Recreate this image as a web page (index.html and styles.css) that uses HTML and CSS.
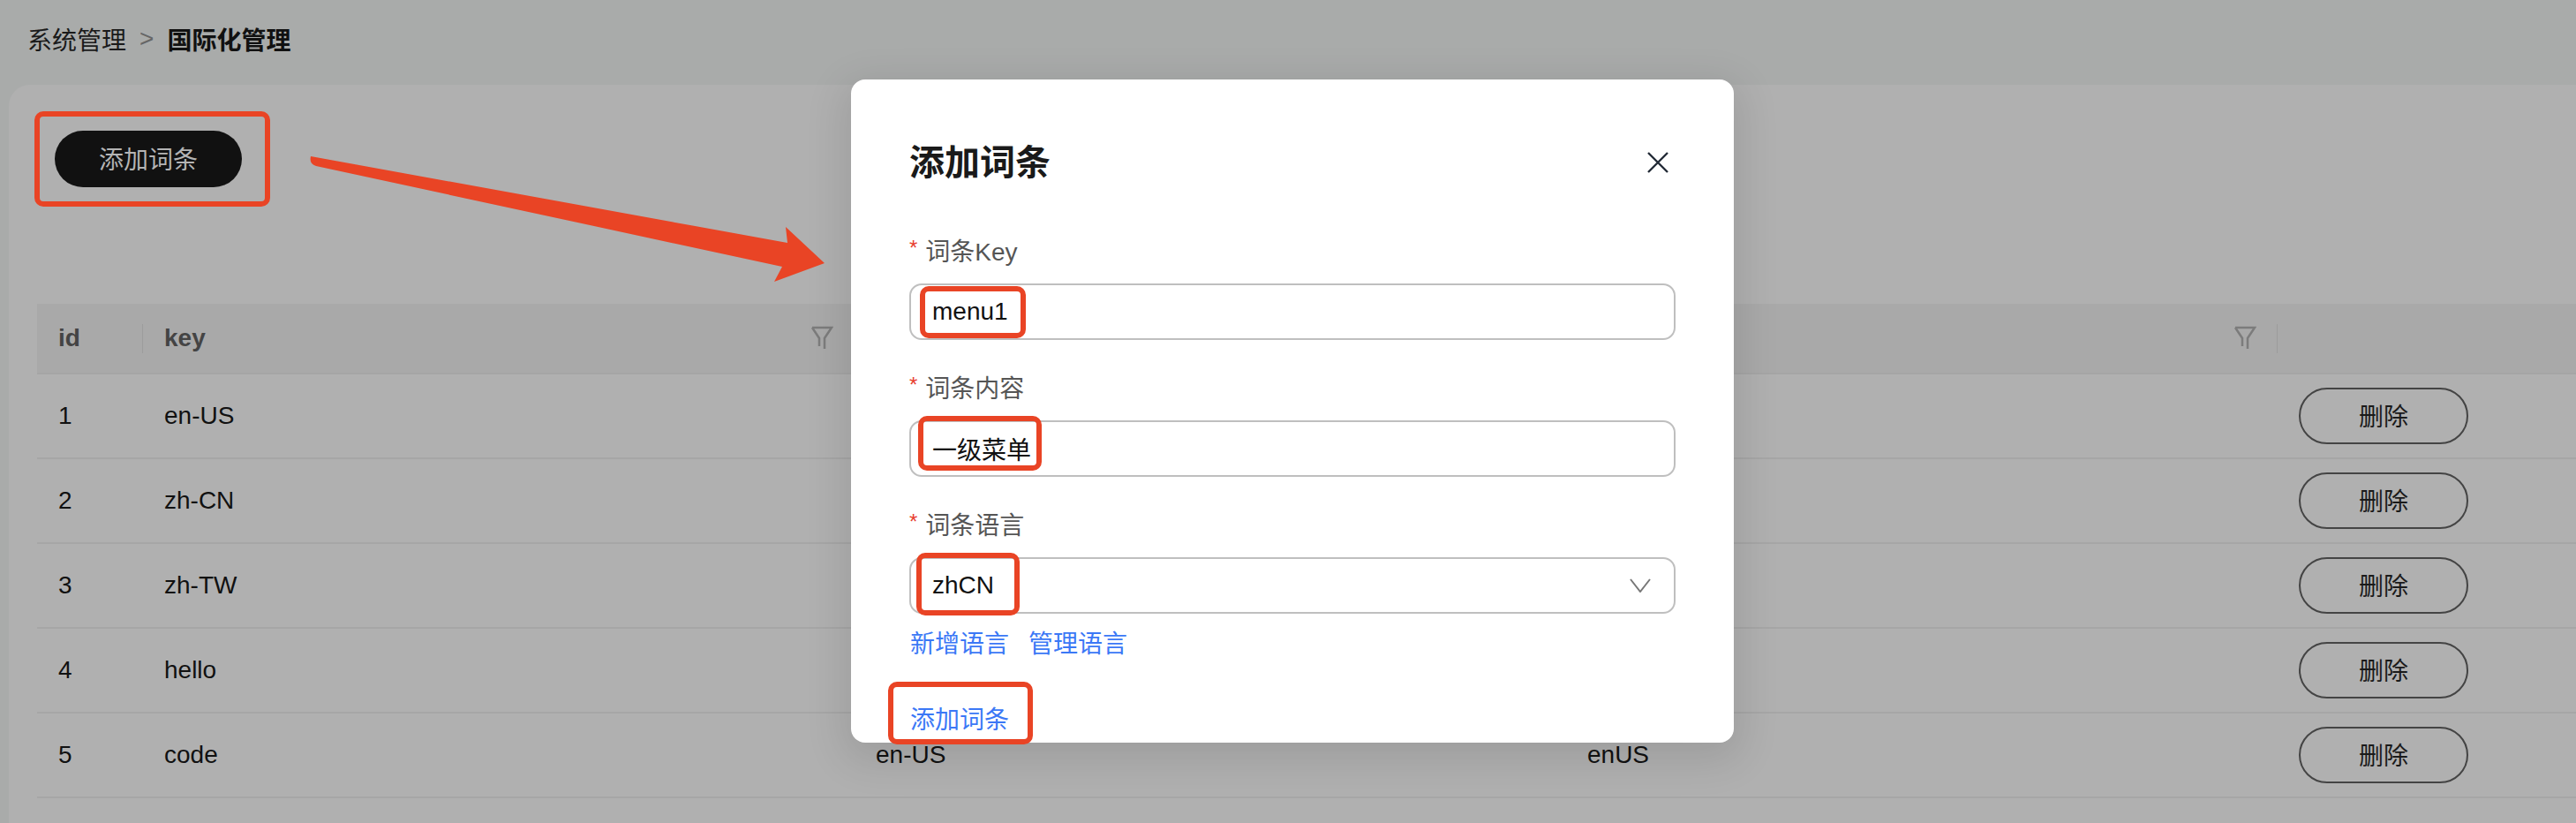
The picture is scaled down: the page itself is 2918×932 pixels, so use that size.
FILE: index.html
```html
<!DOCTYPE html>
<html>
<head>
  <meta charset="utf-8" />
  <title>国际化管理</title>
  <link rel="stylesheet" href="styles.css">
</head>
<body>
  <div class="crumbs">
    <span>系统管理</span>
    <span class="crumb-sep">&gt;</span>
    <b>国际化管理</b>
  </div>
  <div class="card">
    <button type="button" class="add-btn">添加词条</button>
    <table class="words">
      <thead>
        <tr>
          <th class="col-id">id</th>
          <th class="col-text">
            <div class="th-inner">key
              <svg class="filter" viewBox="0 0 26 28"><path d="M2 2H24L16 14V26M10 23V14L2 2"/></svg>
            </div>
          </th>
          <th class="col-text">
            <div class="th-inner">
              <span></span>
              <svg class="filter" viewBox="0 0 26 28"><path d="M2 2H24L16 14V26M10 23V14L2 2"/></svg>
            </div>
          </th>
          <th class="col-text">
            <div class="th-inner">
              <span></span>
              <svg class="filter" viewBox="0 0 26 28"><path d="M2 2H24L16 14V26M10 23V14L2 2"/></svg>
            </div>
          </th>
          <th class="col-action"></th>
        </tr>
      </thead>
      <tbody>
        <tr><td>1</td><td>en-US</td><td></td><td></td><td><button type="button" class="del-btn">删除</button></td></tr>
        <tr><td>2</td><td>zh-CN</td><td></td><td></td><td><button type="button" class="del-btn">删除</button></td></tr>
        <tr><td>3</td><td>zh-TW</td><td></td><td></td><td><button type="button" class="del-btn">删除</button></td></tr>
        <tr><td>4</td><td>hello</td><td></td><td></td><td><button type="button" class="del-btn">删除</button></td></tr>
        <tr><td>5</td><td>code</td><td>en-US</td><td>enUS</td><td><button type="button" class="del-btn">删除</button></td></tr>
      </tbody>
    </table>
  </div>

  <div class="modal">
    <div class="modal-head">
      <h2>添加词条</h2>
      <svg class="close" viewBox="0 0 24 24"><path d="M1 1L23 23M23 1L1 23"/></svg>
    </div>
    <div class="form-item">
      <label><i>*</i>词条Key</label>
      <input type="text" class="field" value="menu1" />
    </div>
    <div class="form-item">
      <label><i>*</i>词条内容</label>
      <input type="text" class="field" value="一级菜单" />
    </div>
    <div class="form-item">
      <label><i>*</i>词条语言</label>
      <div class="field select">
        zhCN
        <svg class="chevron" viewBox="0 0 24 16"><path d="M1 1L12 15L23 1"/></svg>
      </div>
    </div>
    <div class="lang-links">
      <a>新增语言</a>
      <a>管理语言</a>
    </div>
    <a class="modal-add">添加词条</a>
  </div>

  <!-- red marks drawn over the screenshot -->
  <div class="mark mark-add"></div>
  <div class="mark mark-key"></div>
  <div class="mark mark-content"></div>
  <div class="mark mark-lang"></div>
  <div class="mark mark-submit"></div>
  <svg class="arrow" viewBox="0 0 600 160">
    <path d="M2 0L542 98L540 80L584 121L527 142L536 125L8 11Q0 9 2 0Z"/>
  </svg>
</body>
</html>
```

FILE: styles.css
```css
html, body {
  margin: 0;
  height: 932px;
  overflow: hidden;
}
body {
  position: relative;
  background-color: #a9abaa;
  font-family: "Liberation Sans", "Noto Sans CJK SC", sans-serif;
  font-size: 28px;
  color: #111;
}
button {
  font-family: inherit;
  font-size: 28px;
  padding: 0 0 3px;
  cursor: pointer;
}

.crumbs {
  display: flex;
  align-items: center;
  height: 88px;
  padding-left: 31px;
  color: #1a1a1a;
}
.crumb-sep {
  margin: 0 15px;
  color: #666;
}
.crumbs b {
  color: #111;
}

.card {
  margin: 8px 0 0 10px;
  padding: 52px 0 0 32px;
  height: 800px;
  background-color: #b0b0b0;
  border-radius: 24px 0 0 0;
}
.add-btn {
  display: block;
  width: 212px;
  height: 64px;
  margin: 0 0 132px 20px;
  border: none;
  border-radius: 32px;
  background-color: #111;
  color: #b4b4b4;
}

.words {
  width: 2876px;
  table-layout: fixed;
  border-collapse: separate;
  border-spacing: 0;
}
.words th {
  position: relative;
  height: 80px;
  box-sizing: border-box;
  padding: 0 24px;
  background-color: #a9a9a9;
  border-bottom: 2px solid #a5a5a5;
  color: #444;
  font-weight: bold;
  text-align: left;
}
.words th:not(:last-child)::after {
  content: "";
  position: absolute;
  right: -1px;
  top: 23px;
  width: 2px;
  height: 33px;
  background-color: #9c9c9c;
}
.col-id {
  width: 120px;
}
.col-text {
  width: 806px;
}
.th-inner {
  display: flex;
  justify-content: space-between;
  align-items: center;
}
.filter {
  width: 26px;
  height: 28px;
  fill: none;
  stroke: #7c7c7c;
  stroke-width: 2.5;
}
.words td {
  height: 96px;
  box-sizing: border-box;
  padding: 0 24px;
  border-bottom: 2px solid #a6a6a6;
}
.del-btn {
  display: block;
  width: 192px;
  height: 64px;
  border: 2px solid #444;
  border-radius: 32px;
  background: none;
  color: #1a1a1a;
}

.modal {
  position: absolute;
  left: 964px;
  top: 90px;
  width: 1000px;
  box-sizing: border-box;
  padding: 66px 66px 5px;
  background-color: #fff;
  border-radius: 16px;
  box-shadow: 0 12px 44px 10px rgba(0, 0, 0, 0.1);
}
.modal-head {
  display: flex;
  justify-content: space-between;
  align-items: center;
  height: 56px;
  margin-bottom: 50px;
}
.modal-head h2 {
  margin: 0;
  font-size: 40px;
  line-height: 56px;
  font-weight: bold;
  color: #1a1a1a;
}
.close {
  width: 24px;
  height: 24px;
  margin-right: 8px;
  fill: none;
  stroke: #222a36;
  stroke-width: 2.4;
}
.form-item {
  margin-bottom: 32px;
}
.form-item label {
  display: flex;
  align-items: center;
  height: 41px;
  margin-bottom: 18px;
  color: #555;
}
.form-item label i {
  margin: 0 9px 4px 0;
  line-height: 1;
  font-style: normal;
  font-size: 24px;
  color: #e8402f;
}
.field {
  display: block;
  width: 100%;
  height: 64px;
  box-sizing: border-box;
  padding: 0 24px;
  border: 2px solid #bfbfbf;
  border-radius: 14px;
  background-color: #fff;
  font-family: inherit;
  font-size: 28px;
  color: #111;
  outline: none;
}
.select {
  display: flex;
  justify-content: space-between;
  align-items: center;
  padding-right: 26px;
}
.chevron {
  width: 24px;
  height: 16px;
  fill: none;
  stroke: #777;
  stroke-width: 2;
}
.lang-links {
  display: flex;
  gap: 22px;
  margin-top: -17px;
  padding-left: 1px;
  line-height: 40px;
  color: #3b78f6;
}
.modal-add {
  display: block;
  margin-top: 46px;
  padding-left: 1px;
  line-height: 40px;
  color: #3b78f6;
}

.mark {
  position: absolute;
  box-sizing: border-box;
  border: 6px solid #e94425;
  border-radius: 10px;
}
.mark-add {
  left: 39px;
  top: 126px;
  width: 267px;
  height: 108px;
}
.mark-key {
  left: 1042px;
  top: 324px;
  width: 120px;
  height: 59px;
}
.mark-content {
  left: 1040px;
  top: 471px;
  width: 140px;
  height: 62px;
}
.mark-lang {
  left: 1038px;
  top: 626px;
  width: 117px;
  height: 71px;
}
.mark-submit {
  left: 1006px;
  top: 772px;
  width: 164px;
  height: 71px;
}
.arrow {
  position: absolute;
  left: 350px;
  top: 177px;
  width: 600px;
  height: 160px;
  fill: #e94425;
}
```
